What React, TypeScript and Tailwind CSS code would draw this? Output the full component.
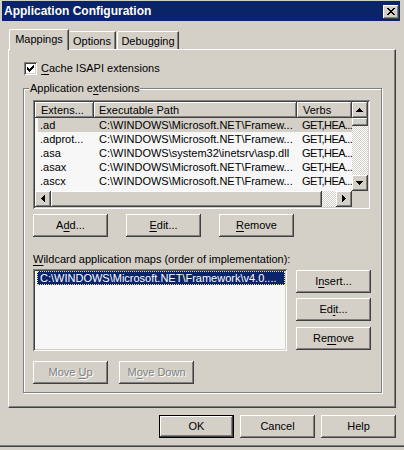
import React from "react";

const FONT = "font-['Liberation_Sans',Arial,sans-serif]";
const RAISED =
  "shadow-[inset_-1px_-1px_#404040,inset_1px_1px_#ffffff,inset_-2px_-2px_#808080,inset_2px_2px_#d4d0c8]";
const SUNKEN =
  "shadow-[inset_1px_1px_#808080,inset_-1px_-1px_#ffffff,inset_2px_2px_#404040,inset_-2px_-2px_#d4d0c8]";
const DITHER =
  "bg-[image:repeating-conic-gradient(#ffffff_0%_25%,#d4d0c8_0%_50%)] bg-[length:2px_2px]";

function U({ children }: { children: React.ReactNode }) {
  return <span className="underline decoration-1 underline-offset-[2px]">{children}</span>;
}

function Button({
  children,
  className = "",
  disabled = false,
  isDefault = false,
}: {
  children: React.ReactNode;
  className?: string;
  disabled?: boolean;
  isDefault?: boolean;
}) {
  const text = disabled ? "text-[#808080] [text-shadow:1px_1px_0_#ffffff]" : "text-black";
  if (isDefault) {
    return (
      <div className={`h-[23px] w-[75px] border border-black ${className}`}>
        <div className={`flex h-full w-full items-center justify-center ${RAISED} ${text}`}>
          <span>{children}</span>
        </div>
      </div>
    );
  }
  return (
    <div className={`flex h-[23px] w-[75px] items-center justify-center ${RAISED} ${text} ${className}`}>
      <span>{children}</span>
    </div>
  );
}

const ARROWS: Record<string, string> = {
  up: "M3 0h1v1H3zM2 1h3v1H2zM1 2h5v1H1zM0 3h7v1H0z",
  down: "M0 0h7v1H0zM1 1h5v1H1zM2 2h3v1H2zM3 3h1v1H3z",
  left: "M3 0h1v7H3zM2 1h1v5H2zM1 2h1v3H1zM0 3h1v1H0z",
  right: "M0 0h1v7H0zM1 1h1v5H1zM2 2h1v3H2zM3 3h1v1H3z",
};

function ScrollBtn({ dir }: { dir: "up" | "down" | "left" | "right" }) {
  const vert = dir === "up" || dir === "down";
  return (
    <div className={`flex h-[16px] w-[16px] shrink-0 items-start justify-start bg-[#d4d0c8] ${RAISED}`}>
      <svg
        width={vert ? 7 : 4}
        height={vert ? 4 : 7}
        viewBox={vert ? "0 0 7 4" : "0 0 4 7"}
        shapeRendering="crispEdges"
        className={vert ? "ml-[4px] mt-[6px]" : "ml-[6px] mt-[4px]"}
      >
        <path d={ARROWS[dir]} fill="#000000" />
      </svg>
    </div>
  );
}

const rows = [
  [".ad", "C:\\WINDOWS\\Microsoft.NET\\Framew...", "GET,HEA..."],
  [".adprot...", "C:\\WINDOWS\\Microsoft.NET\\Framew...", "GET,HEA..."],
  [".asa", "C:\\WINDOWS\\system32\\inetsrv\\asp.dll", "GET,HEA..."],
  [".asax", "C:\\WINDOWS\\Microsoft.NET\\Framew...", "GET,HEA..."],
  [".ascx", "C:\\WINDOWS\\Microsoft.NET\\Framew...", "GET,HEA..."],
];

function ListView() {
  return (
    <div className={`h-[109px] w-[337px] bg-[#f7f7f7] p-[2px] ${SUNKEN}`}>
      <div className="flex h-[89px]">
        <div className="w-[317px] overflow-hidden">
          <div className="flex h-[16px]">
            <div className={`flex w-[59px] items-center overflow-hidden whitespace-nowrap bg-[#d4d0c8] pl-[6px] ${RAISED}`}>
              Extens...
            </div>
            <div className={`flex w-[203px] items-center overflow-hidden whitespace-nowrap bg-[#d4d0c8] pl-[5px] ${RAISED}`}>
              Executable Path
            </div>
            <div className={`flex w-[55px] items-center overflow-hidden whitespace-nowrap bg-[#d4d0c8] pl-[6px] ${RAISED}`}>
              Verbs
            </div>
          </div>
          {rows.map((r, i) => (
            <div key={i} className={`ml-[3px] flex h-[14px] items-center whitespace-nowrap ${i === 0 ? "bg-[#d4d0c8]" : ""}`}>
              <div className="w-[56px] overflow-hidden pl-[2px]">{r[0]}</div>
              <div className="w-[203px] overflow-hidden pl-[5px]">{r[1]}</div>
              <div className="w-[55px] overflow-hidden pl-[5px] tracking-[-0.6px]">{r[2]}</div>
            </div>
          ))}
        </div>
        <div className="flex w-[16px] flex-col">
          <ScrollBtn dir="up" />
          <div className={`h-[8px] w-[16px] bg-[#d4d0c8] ${RAISED}`} />
          <div className={`flex-1 ${DITHER}`} />
          <ScrollBtn dir="down" />
        </div>
      </div>
      <div className="flex h-[16px]">
        <ScrollBtn dir="left" />
        <div className={`flex-1 bg-[#d4d0c8] ${RAISED}`} />
        <div className={`w-[14px] ${DITHER}`} />
        <ScrollBtn dir="right" />
        <div className="w-[16px] bg-[#d4d0c8]" />
      </div>
    </div>
  );
}

export default function App() {
  return (
    <div
      className={`flex h-[450px] w-[404px] flex-col overflow-hidden bg-[#d4d0c8] text-[11px] leading-[13px] text-black ${FONT}`}
    >
      {/* title bar */}
      <div className="ml-[2px] mr-[4px] mt-[1px] flex h-[20px] shrink-0 items-center justify-between bg-[#0a246a] pl-[2px] pr-[1px]">
        <span className="text-[12px] font-bold leading-[14px] text-white">Application Configuration</span>
        <div className={`mt-[1px] flex h-[14px] w-[16px] items-start bg-[#d4d0c8] ${RAISED}`}>
          <svg width="8" height="7" viewBox="0 0 8 7" shapeRendering="crispEdges" className="ml-[4px] mt-[3px]">
            <path
              d="M0 0h2v1H0zM6 0h2v1H6zM1 1h2v1H1zM5 1h2v1H5zM2 2h4v1H2zM3 3h2v1H3zM2 4h4v1H2zM1 5h2v1H1zM5 5h2v1H5zM0 6h2v1H0zM6 6h2v1H6z"
              fill="#000000"
            />
          </svg>
        </div>
      </div>

      <div className="flex flex-col px-[8px]">
        {/* tabs */}
        <div className="relative z-10 -mb-[1px] mt-[8px] flex h-[21px] items-end">
          <div className="ml-[1px] flex h-[21px] w-[60px] justify-center rounded-tl-[2px] border-l border-r border-t border-l-white border-r-[#404040] border-t-white bg-[#d4d0c8] pt-[3px] shadow-[inset_-1px_0_#808080]">
            Mappings
          </div>
          <div className="mb-[1px] flex h-[18px] w-[47px] justify-center rounded-tl-[2px] border-r border-t border-r-[#404040] border-t-white bg-[#d4d0c8] pt-[3px] shadow-[inset_-1px_0_#808080]">
            Options
          </div>
          <div className="mb-[1px] ml-[1px] flex h-[18px] w-[62px] justify-center rounded-tl-[2px] border-l border-r border-t border-l-white border-r-[#404040] border-t-white bg-[#d4d0c8] pt-[3px] shadow-[inset_-1px_0_#808080]">
            Debugging
          </div>
        </div>

        {/* tab panel */}
        <div className="flex h-[359px] flex-col border-b border-l border-r border-t border-b-[#404040] border-l-white border-r-[#404040] border-t-white shadow-[inset_-1px_-1px_#808080]">
          <div className="ml-[15px] mt-[12px] flex h-[13px] items-center gap-[4px]">
            <div className={`h-[13px] w-[13px] bg-white ${SUNKEN}`}>
              <svg width="7" height="7" viewBox="0 0 7 7" shapeRendering="crispEdges" className="ml-[3px] mt-[3px]">
                <path
                  d="M6 0h1v1H6zM5 1h2v1H5zM0 2h1v1H0zM4 2h3v1H4zM0 3h2v1H0zM3 3h3v1H3zM0 4h5v1H0zM1 5h3v1H1zM2 6h1v1H2z"
                  fill="#000000"
                />
              </svg>
            </div>
            <span>
              <U>C</U>ache ISAPI extensions
            </span>
          </div>

          {/* group box */}
          <div className="relative ml-[14px] mt-[13px] flex w-[359px] flex-col border border-[#808080] pb-[8px] pl-[9px] pt-[11px] shadow-[inset_1px_1px_#ffffff,1px_1px_#ffffff]">
            <span className="absolute -top-[7px] left-[5px] bg-[#d4d0c8] px-[1px]">
              Application e<U>x</U>tensions
            </span>

            <ListView />

            <div className="mt-[5px] flex gap-[18px]">
              <Button>
                A<U>d</U>d...
              </Button>
              <Button>
                <U>E</U>dit...
              </Button>
              <Button>
                <U>R</U>emove
              </Button>
            </div>

            <div className="mt-[16px] h-[13px]">
              <U>W</U>ildcard application maps (order of implementation):
            </div>

            <div className="mt-[3px] flex">
              <div className={`h-[82px] w-[254px] bg-[#f7f7f7] p-[2px] ${SUNKEN}`}>
                <div className="ml-[2px] flex h-[14px] items-center whitespace-nowrap border border-dotted border-[#f3d98f] bg-[#0a246a] pl-[2px] text-white">
                  C:\WINDOWS\Microsoft.NET\Framework\v4.0....
                </div>
              </div>
              <div className="ml-[9px] mt-[1px] flex flex-col gap-[5px]">
                <Button>
                  I<U>n</U>sert...
                </Button>
                <Button>
                  Ed<U>i</U>t...
                </Button>
                <Button className="mt-[1px]">
                  Re<U>m</U>ove
                </Button>
              </div>
            </div>

            <div className="mt-[10px] flex gap-[11px]">
              <Button disabled>
                Move <U>U</U>p
              </Button>
              <Button disabled>
                M<U>o</U>ve Down
              </Button>
            </div>
          </div>
        </div>

        {/* dialog buttons */}
        <div className="mt-[7px] flex justify-end gap-[6px]">
          <Button isDefault>OK</Button>
          <Button>Cancel</Button>
          <Button>Help</Button>
        </div>
      </div>

      <div className="mt-[7px] h-[1px] bg-[#808080]" />
      <div className="h-[1px] bg-[#404040]" />
    </div>
  );
}
